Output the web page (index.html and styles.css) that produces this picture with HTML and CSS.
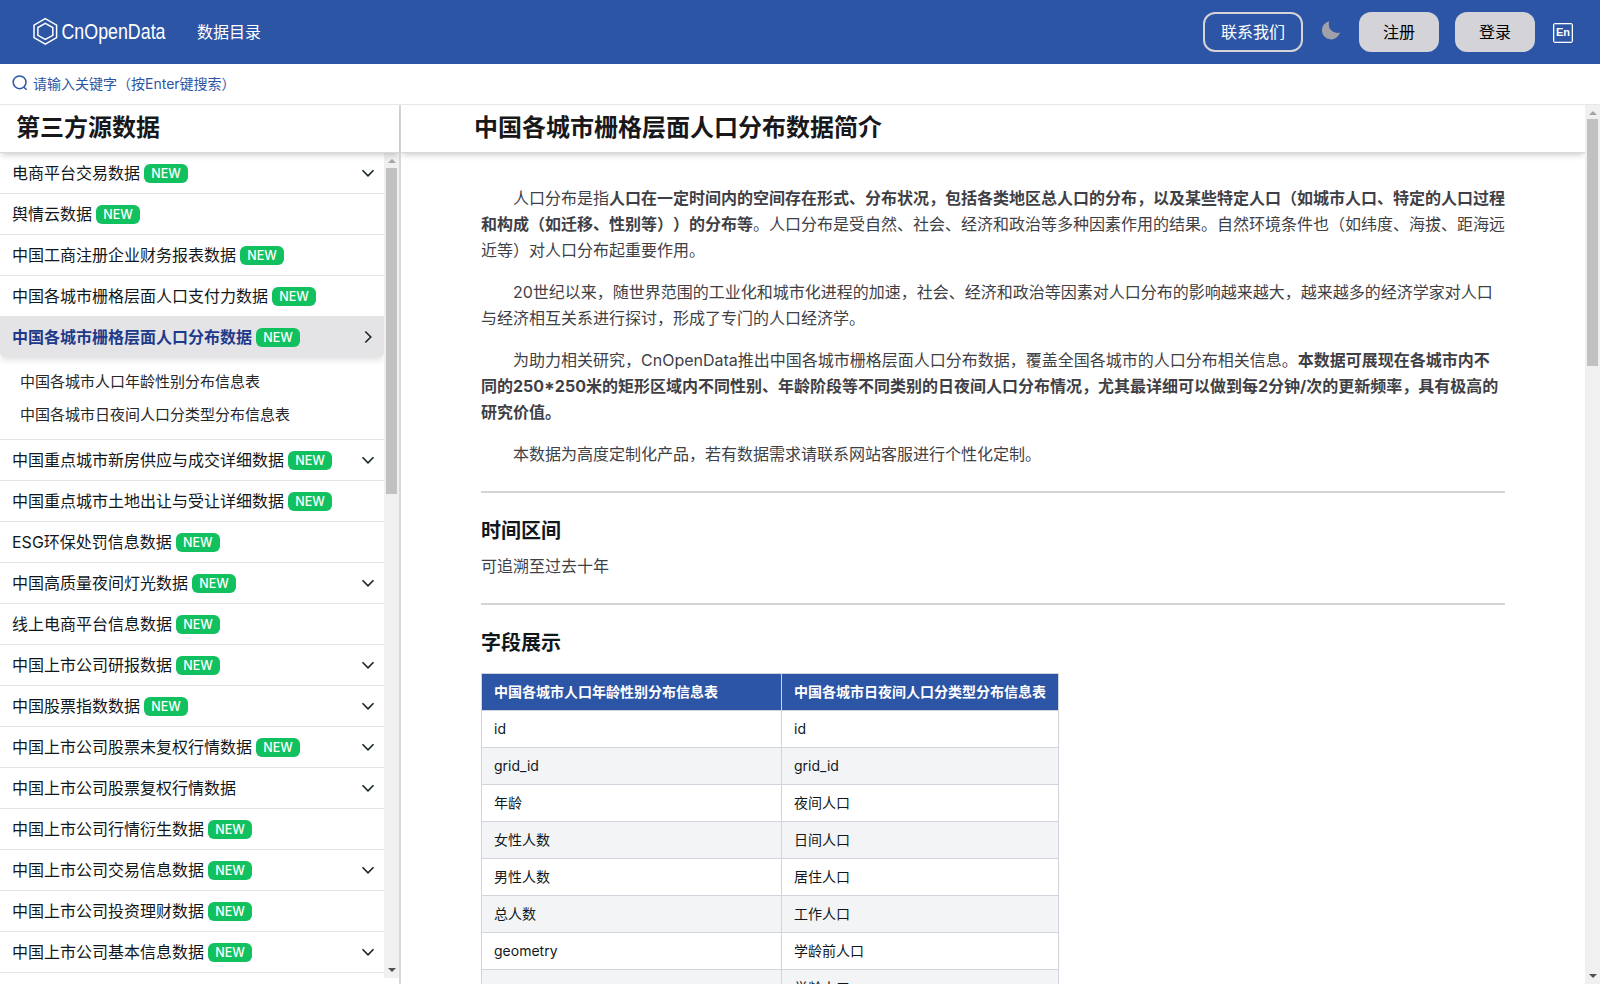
FILE: index.html
```html
<!DOCTYPE html>
<html lang="zh-CN">
<head>
<meta charset="utf-8">
<title>中国各城市栅格层面人口分布数据简介 - CnOpenData</title>
<link rel="stylesheet" href="styles.css">
</head>
<body>
<header class="topbar">
  <a class="logo">
    <svg width="145" height="36" viewBox="0 0 145 36">
      <path d="M13.3 4.7 L24.6 11.2 V23.6 L13.3 30.1 L2 23.6 V11.2 Z" fill="none" stroke="#fff" stroke-width="1.5"/>
      <path d="M13.3 9.3 L20.8 13.5 V21.3 L13.3 25.5 L5.9 21.3 V13.5 Z" fill="none" stroke="#fff" stroke-width="1.5"/>
      <text x="29.5" y="25.3" class="logo-text" textLength="104" lengthAdjust="spacingAndGlyphs">CnOpenData</text>
    </svg>
  </a>
  <a class="catalog">数据目录</a>
  <nav class="actions">
    <a class="contact">联系我们</a>
    <svg class="moon" width="20" height="20" viewBox="0 0 20 20"><path d="M8.3 1.2 A9.2 9.2 0 1 0 19 12.6 A8.8 8.8 0 0 1 8.3 1.2 Z" fill="#a1a1aa"/></svg>
    <a class="btn">注册</a>
    <a class="btn">登录</a>
    <span class="lang">En</span>
  </nav>
</header>
<div class="search">
  <svg width="16" height="16" viewBox="0 0 16 16" fill="none" stroke="#2d55a5" stroke-width="1.5"><circle cx="7.6" cy="7.3" r="6.4"/><path d="M12 12.2 L14.6 14.8"/></svg>
  <span>请输入关键字（按Enter键搜索）</span>
</div>
<div class="shell">
  <aside class="sidebar">
    <h2 class="side-title">第三方源数据</h2>
    <div class="side-body">
      <ul class="menu" id="menu"></ul>
      <div class="scrollbar side-scroll"><i class="up"></i><b></b><i class="down"></i></div>
    </div>
  </aside>
  <main class="main">
    <div class="page">
      <h1 class="page-title">中国各城市栅格层面人口分布数据简介</h1>
      <article class="article">
        <p>人口分布是指<strong>人口在一定时间内的空间存在形式、分布状况，包括各类地区总人口的分布，以及某些特定人口（如城市人口、特定的人口过程<br>和构成（如迁移、性别等））的分布等</strong>。人口分布是受自然、社会、经济和政治等多种因素作用的结果。自然环境条件也（如纬度、海拔、距海远<br>近等）对人口分布起重要作用。</p>
        <p>20世纪以来，随世界范围的工业化和城市化进程的加速，社会、经济和政治等因素对人口分布的影响越来越大，越来越多的经济学家对人口<br>与经济相互关系进行探讨，形成了专门的人口经济学。</p>
        <p>为助力相关研究，CnOpenData推出中国各城市栅格层面人口分布数据，覆盖全国各城市的人口分布相关信息。<strong>本数据可展现在各城市内不<br>同的250*250米的矩形区域内不同性别、年龄阶段等不同类别的日夜间人口分布情况，尤其最详细可以做到每2分钟/次的更新频率，具有极高的<br>研究价值。</strong></p>
        <p>本数据为高度定制化产品，若有数据需求请联系网站客服进行个性化定制。</p>
        <hr>
        <h3>时间区间</h3>
        <p class="plain">可追溯至过去十年</p>
        <hr>
        <h3 class="fields">字段展示</h3>
        <table>
          <thead><tr><th>中国各城市人口年龄性别分布信息表</th><th>中国各城市日夜间人口分类型分布信息表</th></tr></thead>
          <tbody>
            <tr><td>id</td><td>id</td></tr>
            <tr><td>grid_id</td><td>grid_id</td></tr>
            <tr><td>年龄</td><td>夜间人口</td></tr>
            <tr><td>女性人数</td><td>日间人口</td></tr>
            <tr><td>男性人数</td><td>居住人口</td></tr>
            <tr><td>总人数</td><td>工作人口</td></tr>
            <tr><td>geometry</td><td>学龄前人口</td></tr>
            <tr><td></td><td>学龄人口</td></tr>
          </tbody>
        </table>
      </article>
    </div>
    <div class="scrollbar main-scroll"><i class="up"></i><b></b><i class="down"></i></div>
  </main>
</div>
<script src="menu.js"></script>
</body>
</html>
```
FILE: menu.js
```js
// [title, has NEW badge, expandable, child tables]
const items = [
  ["电商平台交易数据", 1, 1],
  ["舆情云数据", 1, 0],
  ["中国工商注册企业财务报表数据", 1, 0],
  ["中国各城市栅格层面人口支付力数据", 1, 0],
  ["中国各城市栅格层面人口分布数据", 1, 1, ["中国各城市人口年龄性别分布信息表", "中国各城市日夜间人口分类型分布信息表"]],
  ["中国重点城市新房供应与成交详细数据", 1, 1],
  ["中国重点城市土地出让与受让详细数据", 1, 0],
  ["ESG环保处罚信息数据", 1, 0],
  ["中国高质量夜间灯光数据", 1, 1],
  ["线上电商平台信息数据", 1, 0],
  ["中国上市公司研报数据", 1, 1],
  ["中国股票指数数据", 1, 1],
  ["中国上市公司股票未复权行情数据", 1, 1],
  ["中国上市公司股票复权行情数据", 0, 1],
  ["中国上市公司行情衍生数据", 1, 0],
  ["中国上市公司交易信息数据", 1, 1],
  ["中国上市公司投资理财数据", 1, 0],
  ["中国上市公司基本信息数据", 1, 1],
];
const chevron = open =>
  `<svg class="chev" width="14" height="14" viewBox="0 0 14 14"><path d="${open ? "M4.3 1.5 L9.8 7 L4.3 12.5" : "M1.5 4.3 L7 9.8 L12.5 4.3"}"/></svg>`;
document.getElementById("menu").innerHTML = items.map(([title, isNew, more, kids]) =>
  `<li><div class="item${kids ? " active" : ""}"><span>${title}</span>` +
  (isNew ? `<em class="badge">NEW</em>` : "") + (more ? chevron(kids) : "") + `</div>` +
  (kids ? `<div class="kids">${kids.map(k => `<a>${k}</a>`).join("")}</div>` : "") + `</li>`
).join("") + `<li class="end"></li>`;
```
FILE: styles.css
```css
* { box-sizing: border-box; }
body {
  margin: 0;
  height: 1000px;
  overflow: hidden;
  background: #fff;
  color: #18181b;
  font-family: Inter, "Noto Sans CJK SC", sans-serif;
  font-size: 16px;
  text-spacing-trim: space-all;
}
h1, h2, h3, p, ul { margin: 0; padding: 0; }
ul { list-style: none; }

.topbar {
  display: flex;
  align-items: center;
  height: 64px;
  padding: 0 27px 0 32px;
  background: #2d55a5;
  color: #fff;
}
.logo { display: flex; }
.logo svg { overflow: visible; }
.logo-text { font: 22px "Liberation Sans", sans-serif; fill: #fff; }
.catalog { margin-left: 20px; padding-bottom: 2px; }
.actions { display: flex; align-items: center; margin-left: auto; }
.contact, .btn {
  display: flex;
  align-items: center;
  justify-content: center;
  height: 40px;
  padding-bottom: 2px;
  border-radius: 12px;
}
.contact { width: 100px; border: 2px solid #d4d4d8; }
.moon { margin: -4px 18px 0; }
.btn { width: 80px; background: #d4d4d8; color: #000; }
.btn + .btn { margin-left: 16px; }
.lang {
  display: flex;
  align-items: center;
  justify-content: center;
  width: 20px;
  height: 20px;
  margin: 1px 0 0 18px;
  border: 1px solid #fff;
  border-radius: 2px;
  box-shadow: inset 0 0 0 1px rgba(255, 255, 255, .3);
  font-family: "Liberation Sans", sans-serif;
  font-size: 11px;
  font-weight: 700;
  line-height: 1;
}

.search {
  display: flex;
  align-items: center;
  gap: 5px;
  height: 40px;
  padding-left: 12px;
  color: #2d55a5;
  font-size: 14px;
}
.search svg { margin-top: -2px; }
.search span { padding-bottom: 2px; }

.shell { display: flex; height: 880px; overflow: hidden; border-top: 1px solid #e8e8ea; }
.sidebar {
  display: flex;
  flex-direction: column;
  width: 401px;
  flex: none;
  border-right: 2px solid #d8d8da;
}
.side-title, .page-title {
  position: relative;
  z-index: 1;
  flex: none;
  height: 48px;
  border-bottom: 1px solid #d9d9dc;
  background: #fff;
  box-shadow: 0 4px 6px -1px rgba(0, 0, 0, .13), 0 2px 4px -2px rgba(0, 0, 0, .1);
  font-size: 24px;
  font-weight: 700;
  line-height: 46px;
}
.side-title { padding-left: 16px; }
.side-body { display: flex; height: 825px; }
.menu { flex: 1; margin-top: -1px; overflow: hidden; }
.menu li { border-top: 1px solid #e4e4e7; }
.item {
  display: flex;
  align-items: center;
  height: 40px;
  padding: 0 9px 0 12px;
  white-space: nowrap;
  color: #11181c;
}
.item span { padding-bottom: 2px; }
.badge {
  display: flex;
  align-items: center;
  justify-content: center;
  width: 44px;
  height: 19px;
  margin-left: 4px;
  border-radius: 6px;
  background: #11c15f;
  color: #fff;
  font-size: 12.5px;
  font-style: normal;
  font-weight: 550;
}
.active .badge { margin-top: 2px; }
.chev { margin-left: auto; fill: none; stroke: #18242a; stroke-width: 1.6; }
.active {
  height: 41px;
  margin-top: -1px;
  background: #e4e4e7;
  color: #1e3a8a;
  font-weight: 700;
  border-radius: 0 0 5px 5px;
  box-shadow: 0 4px 6px -1px rgba(0, 0, 0, .13);
}
.kids {
  display: flex;
  flex-direction: column;
  height: 82px;
  padding: 8px 0 0 20px;
  color: #27272a;
  font-size: 15px;
  line-height: 33px;
}

.scrollbar {
  display: flex;
  flex-direction: column;
  align-items: center;
  justify-content: space-between;
  width: 15px;
  flex: none;
  padding: 6px 0;
  background: #f0f0f0;
}
.scrollbar i { border: 3.5px solid transparent; height: 0; }
.scrollbar b { width: 11px; margin: 0 0 auto; background: #c1c1c1; }
.scrollbar .up { border-width: 0 4px 4px; border-bottom-color: #a3a3a3; }
.scrollbar .down { border-width: 4px 4px 0; border-top-color: #505050; }
.side-scroll b { height: 326px; margin-top: 5px; }
.main-scroll b { height: 247px; margin-top: 4px; }

.main { display: flex; flex: 1; }
.page { flex: 1; height: 879px; overflow: hidden; }
.page-title { padding-left: 73px; }
.article { width: 1104px; padding: 32px 0 0 80px; color: #3f3f46; }
.article p {
  margin-bottom: 16px;
  line-height: 26px;
  text-indent: 32px;
  white-space: nowrap;
}
.article p.plain { margin: 0 0 24px; text-indent: 0; }
.article hr { height: 2px; margin: 24px 0; border: 0; background: #d4d4d8; }
.article h3 { margin-bottom: 8px; color: #11181c; font-size: 20px; line-height: 28px; }
.article h3.fields { margin-bottom: 16px; }
table { border-collapse: collapse; table-layout: fixed; width: 578px; color: #11181c; font-size: 14px; }
th, td { height: 37px; padding: 0 12px 2px; border: 1px solid #d1d5db; text-align: left; white-space: nowrap; }
th:first-child { width: 300px; }
th { background: #2d55a5; color: #fff; }
tbody tr:nth-child(even) { background: #f3f4f6; }
```
